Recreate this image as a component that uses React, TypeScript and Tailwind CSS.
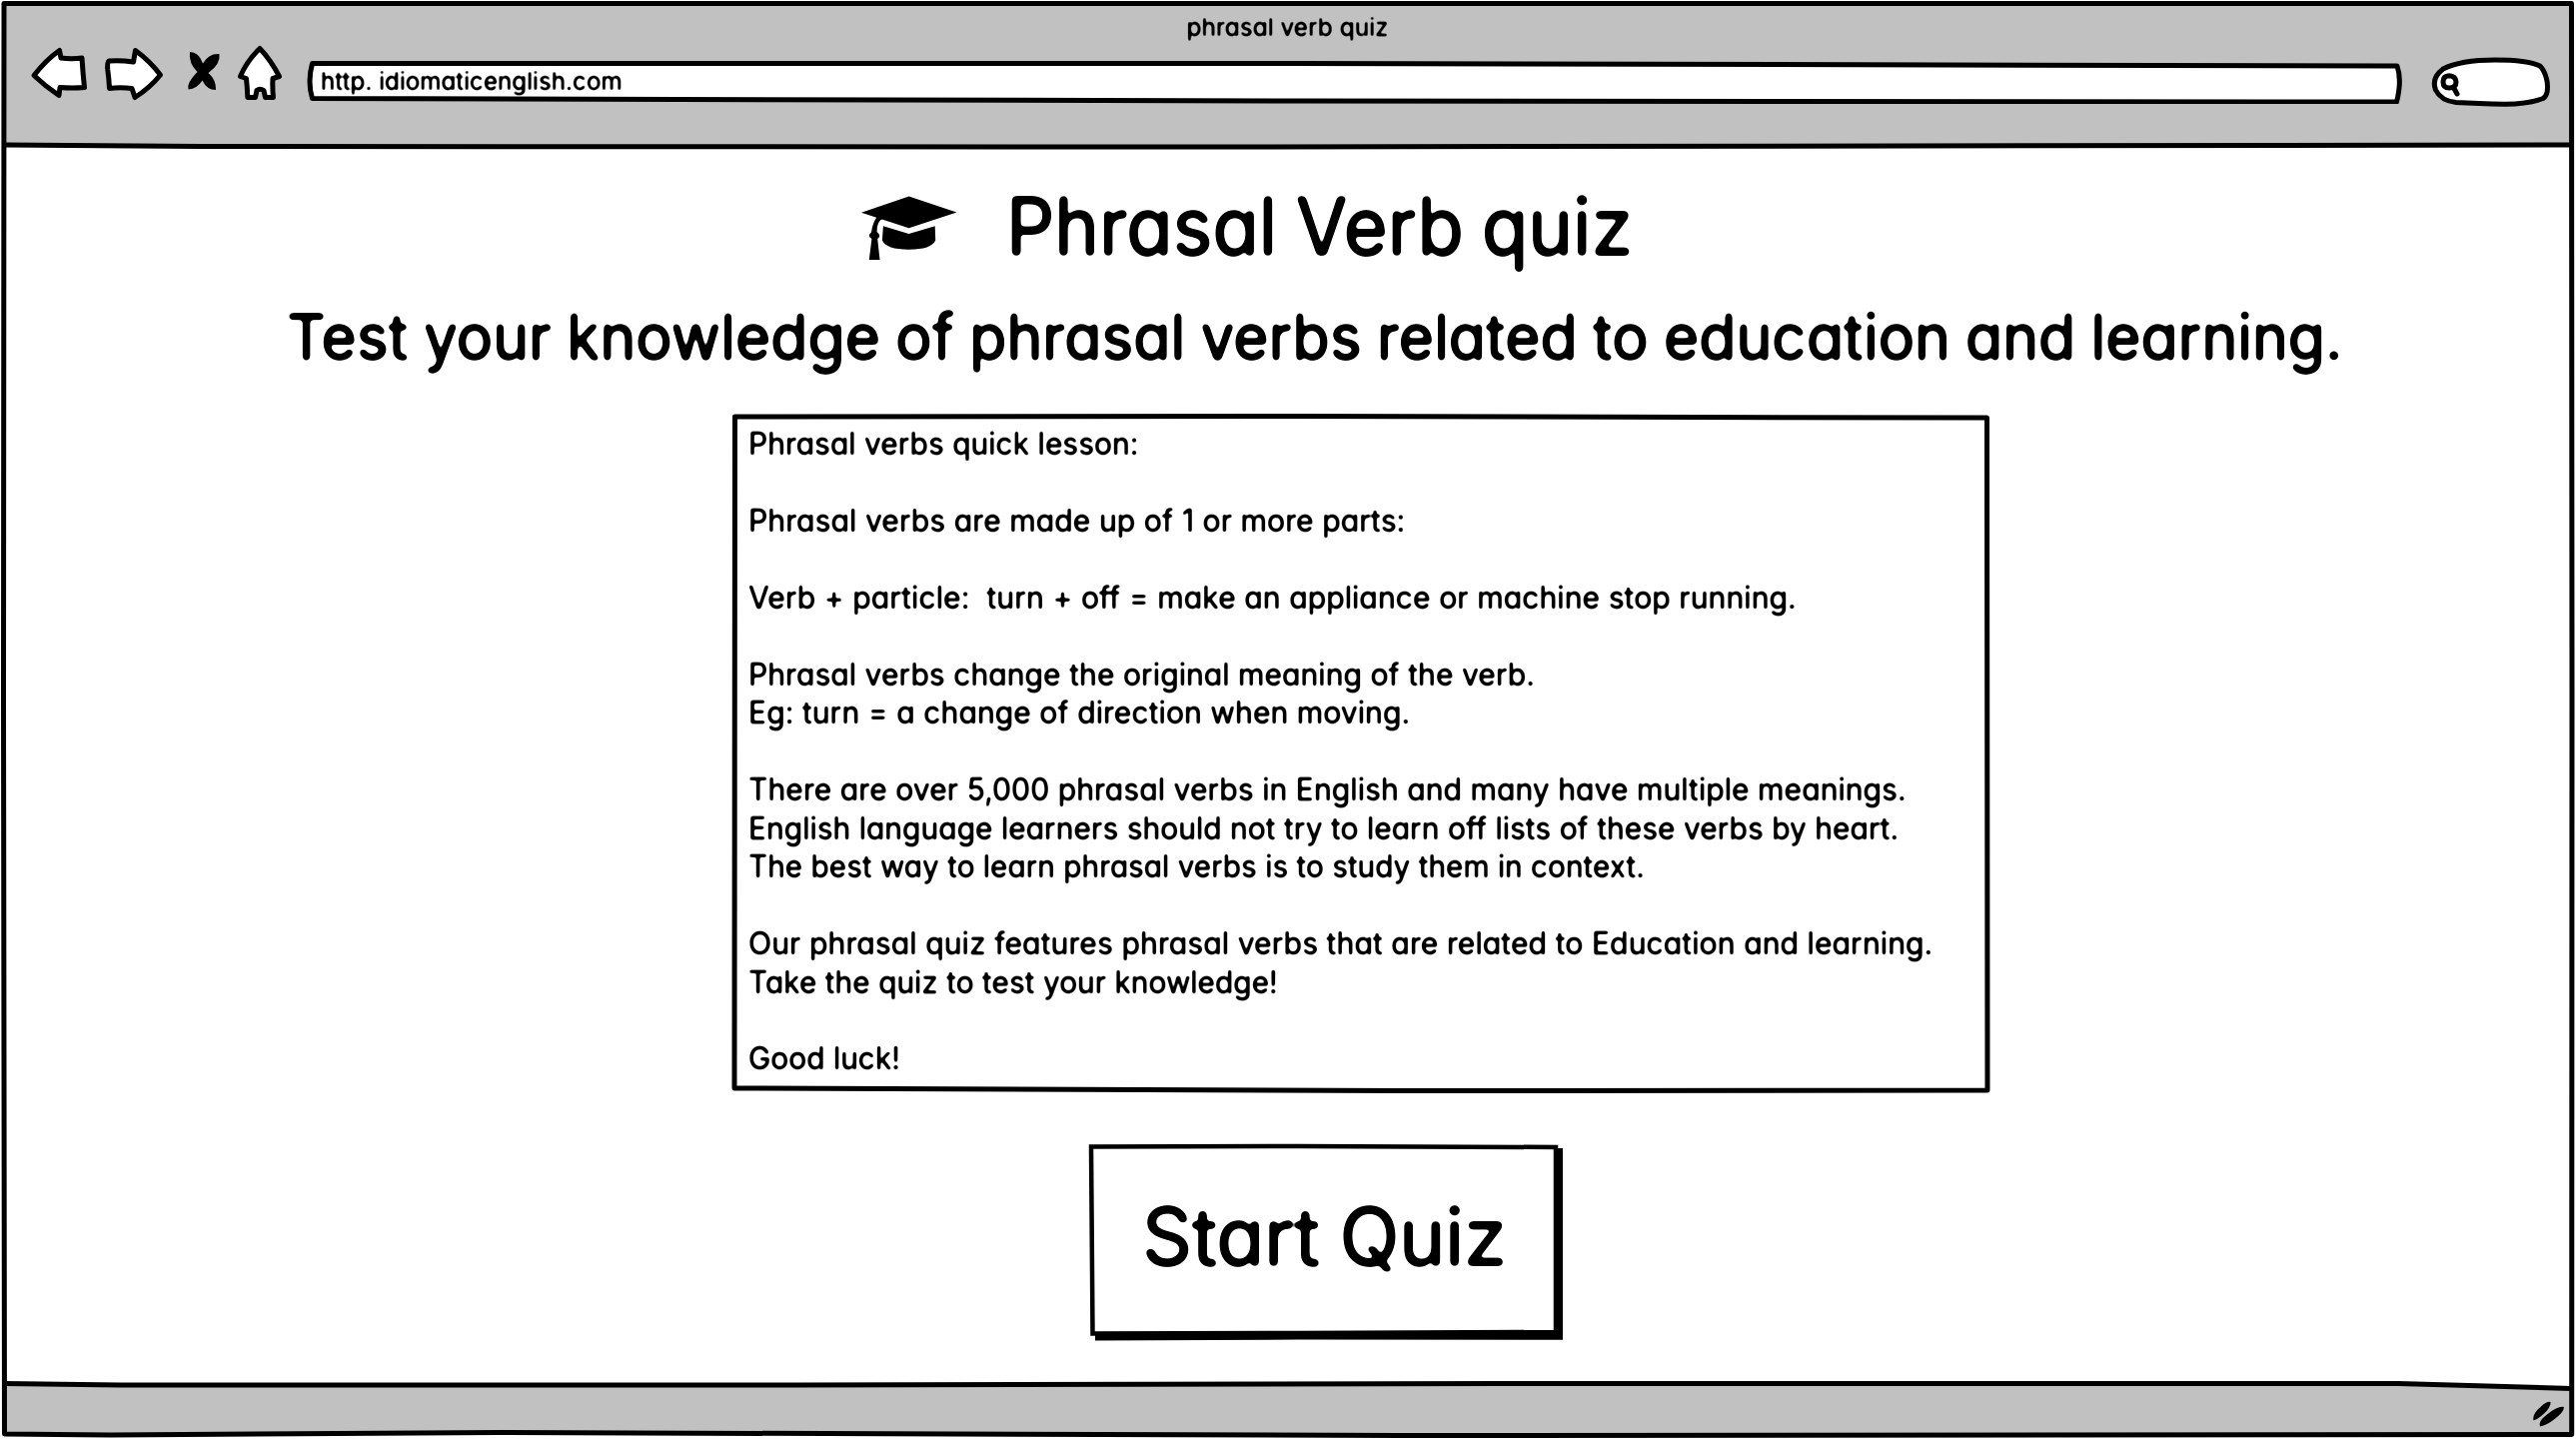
import { useLayoutEffect, useRef, useState } from "react";

type FitTextProps = { text: string; width: number; className?: string };

/** A single line of text, condensed or widened to fill the given width. */
function FitText({ text, width, className = "" }: FitTextProps) {
  const ref = useRef<HTMLSpanElement>(null);
  const [scale, setScale] = useState(1);
  useLayoutEffect(() => {
    if (ref.current) setScale(width / ref.current.offsetWidth);
  }, [text, width]);
  return (
    <span
      ref={ref}
      className={"inline-block origin-left whitespace-pre " + className}
      style={{ transform: `scaleX(${scale})` }}
    >
      {text}
    </span>
  );
}

const LESSON: [string, number][] = [
  ["Phrasal verbs quick lesson:", 390],
  ["", 0],
  ["Phrasal verbs are made up of 1 or more parts:", 657],
  ["", 0],
  ["Verb + particle:  turn + off = make an appliance or machine stop running.", 1049],
  ["", 0],
  ["Phrasal verbs change the original meaning of the verb.", 787],
  ["Eg: turn = a change of direction when moving.", 662],
  ["", 0],
  ["There are over 5,000 phrasal verbs in English and many have multiple meanings.", 1158.5],
  ["English language learners should not try to learn off lists of these verbs by heart.", 1151],
  ["The best way to learn phrasal verbs is to study them in context.", 896.5],
  ["", 0],
  ["Our phrasal quiz features phrasal verbs that are related to Education and learning.", 1185],
  ["Take the quiz to test your knowledge!", 529.5],
  ["", 0],
  ["Good luck!", 151.5],
];

function RoundingFilters() {
  return (
    <svg className="absolute size-0" aria-hidden="true">
      <filter id="round-lg" x="-2%" y="-10%" width="104%" height="120%">
        <feGaussianBlur stdDeviation="2.1" />
        <feComponentTransfer>
          <feFuncA type="linear" slope="7" intercept="-1.9" />
        </feComponentTransfer>
      </filter>
      <filter id="round-sm" x="-2%" y="-10%" width="104%" height="120%">
        <feGaussianBlur stdDeviation="0.8" />
        <feComponentTransfer>
          <feFuncA type="linear" slope="3" intercept="-0.6" />
        </feComponentTransfer>
      </filter>
    </svg>
  );
}

const ink = "fill-white stroke-black stroke-[5] [stroke-linejoin:round] [stroke-linecap:round]";

function BackIcon() {
  return (
    <svg className="ml-[28px] h-[60px] w-[62px] shrink-0" viewBox="28 44 62 60">
      <path className={ink} d="M34 75.5 Q46 60 59.5 50.5 L61 58 Q72 59.500 82 58 Q83 74 84.500 87.500 Q72 88.500 60 87.500 L59 95.500 Q45 86 34 75.500Z" />
    </svg>
  );
}

function ForwardIcon() {
  return (
    <svg className="ml-[13px] h-[60px] w-[64px] shrink-0" viewBox="103 44 64 60">
      <path className={ink} d="M109 61 Q120 60 133.500 62 L135.500 50.500 Q150 61 160.500 75 Q150 88 135 97.500 L132 88.500 Q120 87 109.500 88.500 Q109 78 107.800 70 Q107 63 109 61Z" />
    </svg>
  );
}

function StopIcon() {
  return (
    <svg className="ml-[17px] h-[60px] w-[40px] shrink-0" viewBox="184 44 40 60">
      <path d="M190 52 Q199 52 203 63.500 Q209 53 219.500 54 Q221 64 208.500 73 Q216.500 80 216 90 Q207 90 202.500 80.500 Q197 89 188.500 89.500 Q186.500 83 197.500 72 Q188.500 63 190 52Z" />
    </svg>
  );
}

function HomeIcon() {
  return (
    <svg className="ml-[12px] h-[60px] w-[50px] shrink-0" viewBox="236 44 50 60">
      <path className={ink} d="M260 48.500 Q271 60 279.500 76.500 L273 78.500 Q272.500 88 273.500 97.500 L265.500 97.500 L264 90.500 Q260 88 257 90.500 L255.500 97.500 L247.800 97.500 Q247.500 88 246.500 78.500 L240.500 76.500 Q247 61 260 48.500Z" />
    </svg>
  );
}

function AddressBar() {
  return (
    <div className="relative ml-[19px] h-[60px] w-[2100px] shrink-0">
      <svg className="absolute inset-0 size-full" viewBox="305 44 2100 60">
        <path className={ink} d="M312.500 63.500 L1300 63.500 L2399 66 Q2404 80 2398.500 102 L1300 101 L312.500 98.500 Q307.500 82 312.500 63.500Z" />
      </svg>
      <div className="relative pt-[22.500px] pl-[15.500px] text-[24.500px] leading-[28px] [filter:url(#round-sm)]">
        <FitText text="http. idiomaticenglish.com" width={301.5} />
      </div>
    </div>
  );
}

function SearchBox() {
  return (
    <svg className="ml-[25px] h-[66px] w-[126px] shrink-0" viewBox="2430 44 126 66">
      <path className={ink} d="M2458 102.500 Q2443 101 2437.500 90 Q2433 78 2445 69 Q2462 60 2497 60 Q2530 60 2542 66 Q2547 71 2549 81 Q2551 95 2545 98.500 Q2530 104 2507 104.300 Q2480 103.500 2458 102.500Z" />
      <path className={ink} d="M2445 82 Q2445 76 2451 75.800 Q2457.500 76 2458 82 Q2458 88 2451 88 Q2445 88 2445 82Z M2455.500 87.500 L2459 94" />
    </svg>
  );
}

function GraduationCap() {
  return (
    <svg className="mt-[18px] h-[65px] w-[96px] shrink-0" viewBox="0 0 96 65">
      <path d="M47.600 .5 L95.500 16.400 L47.600 32.300 L0 16.700Z" />
      <path d="M21.900 30.300 L47.600 38 L73.700 30.300 L74.200 44.500 Q70 53.700 47.600 53.700 Q25 53.700 20.900 44.500Z" />
      <path d="M10.400 43 Q5.500 40 10 36.500 Q11 28 15.500 21 L21.500 23 Q15.500 25 15.600 36 Q20.500 40 16.200 43 L18.500 64 L7.800 64Z" />
    </svg>
  );
}

const frame = "fill-none stroke-black stroke-[5] [stroke-linejoin:round]";

export default function App() {
  return (
    <div className="relative flex h-[1440px] w-[2578px] flex-col overflow-hidden bg-white font-[Inter,'Noto_Sans',sans-serif] text-black [font-feature-settings:'cv11'_1]">
      <RoundingFilters />

      <header className="mx-[4px] mt-[3px] h-[143px] shrink-0 bg-[#c1c1c1] pt-[10px]">
        <div className="flex h-[28px] justify-center text-[24.500px] leading-[28px] [filter:url(#round-sm)]">
          <div className="w-[203px]">
            <FitText text="phrasal verb quiz" width={202} />
          </div>
        </div>
        <div className="mt-[3px] -ml-[4px] flex items-start">
          <BackIcon />
          <ForwardIcon />
          <StopIcon />
          <HomeIcon />
          <AddressBar />
          <SearchBox />
        </div>
      </header>

      <main className="flex h-[1239px] shrink-0 flex-col items-start">
        <div className="mt-[32px] ml-[862px] flex h-[100px] items-start">
          <GraduationCap />
          <h1 className="ml-[49px] text-[79.500px] leading-[96px] [word-spacing:-0.04em] [filter:url(#round-lg)]">
            <FitText text="Phrasal Verb quiz" width={627} />
          </h1>
        </div>

        <h2 className="mt-[19px] ml-[287px] text-[63.500px] leading-[80px] [word-spacing:-0.03em] [filter:url(#round-lg)]">
          <FitText
            text="Test your knowledge of phrasal verbs related to education and learning."
            width={2058}
          />
        </h2>

        <section className="relative mt-[37px] ml-[732px] h-[680px] w-[1260px]">
          <svg className="absolute inset-0 size-full" viewBox="732 414 1260 680">
            <path className={frame} d="M735.500 417 L1300 416.500 L1700 417.500 L1988.500 418 Q1990 700 1989 1091 L1400 1091.500 L735 1089 Q734 700 735.500 417Z" />
          </svg>
          <div className="relative pt-[11.400px] pl-[16.500px] text-[31.400px] leading-[38.440px] [filter:url(#round-sm)]">
            {LESSON.map(([text, width], i) => (
              <p key={i} className="h-[38.440px]">
                {text && <FitText text={text} width={width} />}
              </p>
            ))}
          </div>
        </section>

        <button className="relative mt-[50px] ml-[1089px] flex h-[200px] w-[478px] items-start text-left">
          <svg className="absolute inset-0 size-full" viewBox="1089 1144 478 200">
            <path d="M1096 1149 H1564 V1340.700 L1300 1340.500 L1096 1341.500Z" />
            <path className="fill-white stroke-black stroke-[4.500]" d="M1092 1147.500 L1300 1147 L1557 1148 L1557 1333 L1300 1334 L1093.500 1334.500Z" />
          </svg>
          <span className="relative mt-[44.500px] ml-[54px] text-[79.500px] leading-[96px] [word-spacing:-0.03em] [filter:url(#round-lg)]">
            <FitText text="Start Quiz" width={365} />
          </span>
        </button>
      </main>

      <footer className="mx-[4px] flex h-[51px] shrink-0 justify-end bg-[#c1c1c1] pt-[14px] pr-[5px]">
        <svg className="h-[32px] w-[36px]" viewBox="2533 1399 36 32">
          <path d="M2535.500 1421.500 Q2534 1415 2543 1407.500 Q2549 1402 2552.500 1403 Q2553 1408 2546 1414.500 Q2541 1419.500 2535.500 1421.500Z" />
          <path d="M2542 1427.500 Q2540 1422 2549 1415.500 Q2560 1406.500 2566 1408 Q2566 1413 2556 1420.500 Q2549 1426 2542 1427.500Z" />
        </svg>
      </footer>

      <svg className="pointer-events-none absolute inset-0 size-full" viewBox="0 0 2578 1440">
        <path className="fill-white" d="M2400 1382 H2573 V1389 Q2480 1387 2400 1385Z" />
        <path className={frame} d="M4 3.500 H2573.500 L2574 700 L2573.700 1435.500 L1400 1436.500 L500 1433.500 L110 1436 L4.500 1435 L3.500 700Z" />
        <path className={frame} d="M4 145 L200 146.500 L1200 147 L2573 145" />
        <path className={frame} d="M4 1384.500 L120 1386 L800 1386 L1500 1384.500 L2400 1384.500 L2573 1389.500" />
      </svg>
    </div>
  );
}
